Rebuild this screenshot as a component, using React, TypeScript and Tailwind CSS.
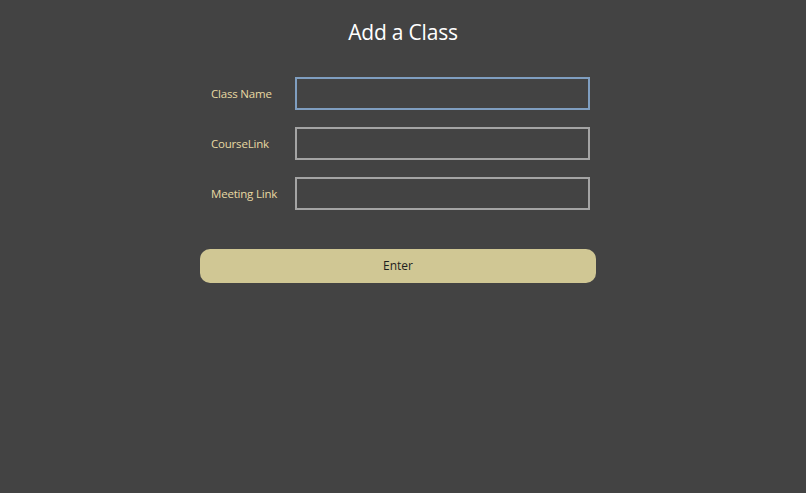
export default function App() {
  const fields = ['Class Name', 'CourseLink', 'Meeting Link']

  return (
    <div
      className="min-h-[493px] w-full bg-[#434343] pt-[19px]"
      style={{ fontFamily: '"Open Sans", "DejaVu Sans", sans-serif' }}
    >
      <h1 className="text-center text-[21px] leading-[27px] tracking-[-0.2px] text-white">Add a Class</h1>

      <div className="flex justify-center pr-[10px]">
        <form className="mt-[31px] w-[396px]" onSubmit={(event) => event.preventDefault()}>
          <div className="flex flex-col gap-[17px]">
            {fields.map((label, index) => (
              <div key={label} className="flex items-center">
                <label className="w-[95px] pl-[11px] text-[11.5px] tracking-[-0.2px] text-[#e8d9a2]">
                  {label}
                </label>
                <input
                  type="text"
                  autoFocus={index === 0}
                  className={
                    index === 0
                      ? 'h-[33px] w-[295px] border-2 border-solid border-[#7f9ec0] bg-transparent px-1 text-[12px] text-white caret-[#bbbbbb] outline-none'
                      : 'h-[33px] w-[295px] border-2 border-solid border-[#a4a4a4] bg-transparent px-1 text-[12px] text-white outline-none'
                  }
                />
              </div>
            ))}
          </div>

          <button
            type="submit"
            className="mt-[39px] h-[34px] w-full rounded-[10px] bg-[#d0c794] text-[12px] text-[#1e1e1e]"
          >
            Enter
          </button>
        </form>
      </div>
    </div>
  )
}
